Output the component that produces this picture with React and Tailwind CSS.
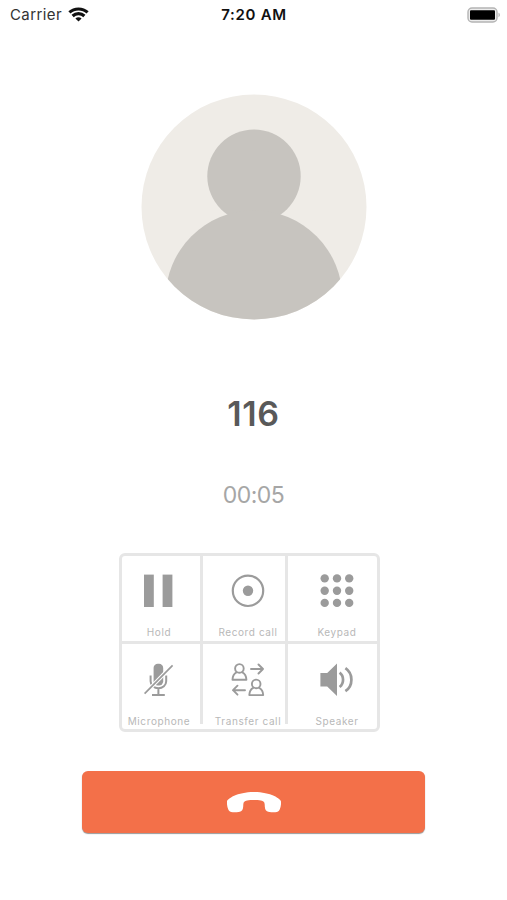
function WifiIcon() {
  return (
    <svg viewBox="0 0 21 15" className="h-[15px] w-[21px]" fill="none" stroke="#111" strokeWidth="3.1">
      <path d="M1.4 5.4C6.4 .8 14.6 .8 19.6 5.4" />
      <path d="M4.6 9C8 5.8 13 5.8 16.4 9" />
      <path d="M7.4 11.4C9.2 9.7 11.8 9.7 13.6 11.4L10.5 14.5Z" fill="#111" stroke="none" />
    </svg>
  );
}

function BatteryIcon() {
  return (
    <svg viewBox="0 0 34 16" className="h-4 w-[34px]">
      <rect x="1" y="1" width="29" height="14" rx="4" fill="#ececec" stroke="#b4b4b4" strokeWidth="1.4" />
      <rect x="3" y="3.2" width="25" height="9.6" rx="1" fill="#000" />
      <path d="M31.5 5.8c1.8.6 1.8 3.8 0 4.4z" fill="#b4b4b4" />
    </svg>
  );
}

function Avatar() {
  return (
    <svg viewBox="0 0 226 226" className="h-[226px] w-[226px]">
      <defs>
        <clipPath id="avatar">
          <circle cx="113" cy="113" r="112.5" />
        </clipPath>
      </defs>
      <g clipPath="url(#avatar)">
        <rect width="226" height="226" fill="#efece7" />
        <circle cx="113" cy="82.2" r="46.7" fill="#c7c4bf" />
        <circle cx="113" cy="204.8" r="88.5" fill="#c7c4bf" />
      </g>
    </svg>
  );
}

function HoldIcon() {
  return (
    <svg viewBox="0 0 34 34" className="h-[34px] w-[34px] shrink-0" fill="#9b9b9b">
      <rect x="2" y=".6" width="9.8" height="32.4" />
      <rect x="20.6" y=".6" width="9.8" height="32.4" />
    </svg>
  );
}

function RecordIcon() {
  return (
    <svg viewBox="0 0 34 34" className="h-[34px] w-[34px] shrink-0">
      <circle cx="17" cy="16.8" r="15.2" fill="none" stroke="#9b9b9b" strokeWidth="2.2" />
      <circle cx="17" cy="16.8" r="5.2" fill="#9b9b9b" />
    </svg>
  );
}

function KeypadIcon() {
  const steps = [4.7, 17, 29.2];
  return (
    <svg viewBox="0 0 34 34" className="h-[34px] w-[34px] shrink-0" fill="#9b9b9b">
      {steps.map((y) => steps.map((x) => <circle key={`${x}-${y}`} cx={x} cy={y - 0.3} r="4.2" />))}
    </svg>
  );
}

function MicOffIcon() {
  return (
    <svg viewBox="0 0 34 34" className="h-[34px] w-[34px] shrink-0" fill="none" stroke="#9b9b9b">
      <rect x="11.6" y=".7" width="9.6" height="21.8" rx="4.2" fill="#9b9b9b" stroke="none" />
      <path d="M8.6 12.5v5.7a7.8 7 0 0 0 15.6 0v-5.7M16.4 25.2v6.6M10 32h12.8" strokeWidth="2" />
      <path d="M5 28.3 28.2 4.7" stroke="#fff" strokeWidth="3.8" />
      <path d="M2.6 30.7 30.6 2.3" strokeWidth="1.7" />
    </svg>
  );
}

function TransferIcon() {
  return (
    <svg
      viewBox="0 0 34 34"
      className="h-[34px] w-[34px] shrink-0"
      fill="none"
      stroke="#9b9b9b"
      strokeWidth="1.9"
      strokeLinecap="round"
      strokeLinejoin="round"
    >
      <circle cx="8.4" cy="5.4" r="4.3" />
      <path d="M5.4 9.3C3 10.6 1.600 13 1.500 16.800h13.900c-.1-3.800-1.600-6.200-4-7.500" />
      <path d="M20 6h12M27.500 1.500 32 6l-4.500 4.500" />
      <circle cx="25.200" cy="20.900" r="4.300" />
      <path d="M22.200 24.800c-2.400 1.300-3.800 3.700-3.900 7.300h13.900c-.1-3.600-1.600-6-4-7.300" />
      <path d="M14 27.200H2M6.500 22.700 2 27.200l4.500 4.500" />
    </svg>
  );
}

function SpeakerIcon() {
  return (
    <svg viewBox="0 0 34 34" className="h-[34px] w-[34px] shrink-0" fill="none" stroke="#9b9b9b" strokeWidth="2.7">
      <path d="M.4 10h6.800L17 .5v32.400l-9.800-9.500H.4z" fill="#9b9b9b" stroke="none" />
      <path d="M19.600 9.600c4.600 3.400 4.600 11 0 14.400" />
      <path d="M25.400 5.200c8 5.400 8 17.600 0 23" />
    </svg>
  );
}

function HangUpIcon() {
  return (
    <svg viewBox="0 0 54 21" className="h-[21px] w-[54px]" fill="#fff">
      <path d="M0 9.500C0 7 10 0 27 0s27 7 27 9.500c.2 3-.2 5.500-1.400 8.300-.7 1.800-2 2.300-4.300 2.400-2.800.1-6.300.2-8.300-1-2-1.200-2.200-3.200-2.300-6.700-.1-2.700-1.300-3.800-3.700-4.100-4-.6-10-.6-14 0-2.400.3-3.600 1.400-3.700 4.100-.1 3.500-.3 5.500-2.300 6.700-2 1.200-5.500 1.100-8.300 1-2.300-.1-3.600-.6-4.300-2.400C.2 15-.2 12.500 0 9.500z" />
    </svg>
  );
}

const actions = [
  { label: "Hold", icon: HoldIcon, cell: "h-[88px] border-b-[3px]", inner: "h-full border-r-[3px] pr-[4px] pt-[18px]" },
  { label: "Record call", icon: RecordIcon, cell: "h-[88px] border-b-[3px]", inner: "h-full border-r-[3px] pl-[8px] pt-[18px]" },
  { label: "Keypad", icon: KeypadIcon, cell: "h-[88px] border-b-[3px]", inner: "h-full pl-[9px] pt-[18px]" },
  { label: "Microphone", icon: MicOffIcon, cell: "h-[85px]", inner: "h-20 border-r-[3px] pr-[4px] pt-[19px]" },
  { label: "Transfer call", icon: TransferIcon, cell: "h-[85px]", inner: "h-20 border-r-[3px] pl-[8px] pt-[19px]" },
  { label: "Speaker", icon: SpeakerIcon, cell: "h-[85px]", inner: "h-20 pl-[9px] pt-[19px]" },
];

export default function App() {
  return (
    <main className="flex h-[900px] w-[507px] flex-col items-center overflow-hidden bg-white font-['Inter',sans-serif]">
      <header className="grid h-[29px] w-full shrink-0 grid-cols-3 items-center pl-[10px] pr-[6px] text-[15px] leading-none text-[#111]">
        <div className="flex items-center gap-[6px]">
          <span className="tracking-[0.4px] text-[#333]">Carrier</span>
          <WifiIcon />
        </div>
        <span className="pr-[3px] text-center font-semibold tracking-[0.7px]">7:20 AM</span>
        <div className="flex justify-end">
          <BatteryIcon />
        </div>
      </header>

      <div className="mt-[65px] pl-px">
        <Avatar />
      </div>

      <h1 className="mt-[74px] h-10 text-[34px] font-semibold leading-10 tracking-[0.7px] text-[#595959]">116</h1>
      <p className="mt-[46px] h-[30px] text-[23px] leading-[30px] tracking-[-0.5px] text-[#a6a6a6]">00:05</p>

      <section className="mr-[8px] mt-[43px] grid w-[261px] shrink-0 grid-cols-[81px_85px_89px] rounded-[6px] border-[3px] border-[#e6e6e6]">
        {actions.map(({ label, icon: Icon, cell, inner }) => (
          <button key={label} type="button" className={`flex items-start border-[#e6e6e6] ${cell}`}>
            <span className={`flex w-full flex-col items-center border-[#e6e6e6] ${inner}`}>
              <Icon />
              <span className="mt-[17px] whitespace-nowrap text-[10px] leading-[14px] tracking-[0.6px] text-[#b8b8b8]">
                {label}
              </span>
            </span>
          </button>
        ))}
      </section>

      <button
        type="button"
        aria-label="End call"
        className="mt-[39px] flex h-[62px] w-[343px] shrink-0 items-center justify-center rounded-[6px] bg-[#f37049] shadow-[0_1px_1px_#999]"
      >
        <HangUpIcon />
      </button>
    </main>
  );
}
